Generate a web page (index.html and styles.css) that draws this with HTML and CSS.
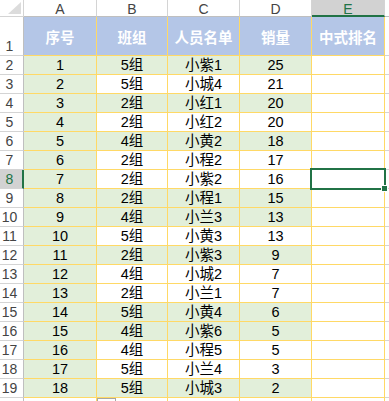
FILE: index.html
```html
<!DOCTYPE html>
<html lang="zh">
<head>
<meta charset="utf-8">
<title>Sheet</title>
<link rel="stylesheet" href="styles.css">
</head>
<body>
<div class="sheet">
  <div class="corner"><span class="tri"></span></div>
  <div class="ch">A</div><div class="ch">B</div><div class="ch">C</div><div class="ch">D</div><div class="ch ch-sel">E</div><div class="ch ch-f"></div>

  <div class="rh rh-tall">1</div>
  <div class="c hd">序号</div><div class="c hd">班组</div><div class="c hd">人员名单</div><div class="c hd">销量</div><div class="c hd">中式排名</div><div class="c f"></div>

  <div class="rh">2</div><div class="c g">1</div><div class="c g">5组</div><div class="c g">小紫1</div><div class="c g">25</div><div class="c"></div><div class="c f"></div>
  <div class="rh">3</div><div class="c g">2</div><div class="c">5组</div><div class="c">小城4</div><div class="c">21</div><div class="c"></div><div class="c f"></div>
  <div class="rh">4</div><div class="c g">3</div><div class="c g">2组</div><div class="c g">小红1</div><div class="c g">20</div><div class="c"></div><div class="c f"></div>
  <div class="rh">5</div><div class="c g">4</div><div class="c">2组</div><div class="c">小红2</div><div class="c">20</div><div class="c"></div><div class="c f"></div>
  <div class="rh">6</div><div class="c g">5</div><div class="c g">4组</div><div class="c g">小黄2</div><div class="c g">18</div><div class="c"></div><div class="c f"></div>
  <div class="rh">7</div><div class="c g">6</div><div class="c">2组</div><div class="c">小程2</div><div class="c">17</div><div class="c"></div><div class="c f"></div>
  <div class="rh rh-sel">8</div><div class="c g">7</div><div class="c">2组</div><div class="c">小紫2</div><div class="c">16</div><div class="c sel-cell"><span class="sel"><span class="handle"></span></span></div><div class="c f"></div>
  <div class="rh">9</div><div class="c g">8</div><div class="c g">2组</div><div class="c g">小程1</div><div class="c g">15</div><div class="c"></div><div class="c f"></div>
  <div class="rh">10</div><div class="c g">9</div><div class="c g">4组</div><div class="c g">小兰3</div><div class="c g">13</div><div class="c"></div><div class="c f"></div>
  <div class="rh">11</div><div class="c g">10</div><div class="c">5组</div><div class="c">小黄3</div><div class="c">13</div><div class="c"></div><div class="c f"></div>
  <div class="rh">12</div><div class="c g">11</div><div class="c g">2组</div><div class="c g">小紫3</div><div class="c g">9</div><div class="c"></div><div class="c f"></div>
  <div class="rh">13</div><div class="c g">12</div><div class="c">4组</div><div class="c">小城2</div><div class="c">7</div><div class="c"></div><div class="c f"></div>
  <div class="rh">14</div><div class="c g">13</div><div class="c">2组</div><div class="c">小兰1</div><div class="c">7</div><div class="c"></div><div class="c f"></div>
  <div class="rh">15</div><div class="c g">14</div><div class="c g">5组</div><div class="c g">小黄4</div><div class="c g">6</div><div class="c"></div><div class="c f"></div>
  <div class="rh">16</div><div class="c g">15</div><div class="c g">4组</div><div class="c g">小紫6</div><div class="c g">5</div><div class="c"></div><div class="c f"></div>
  <div class="rh">17</div><div class="c g">16</div><div class="c">4组</div><div class="c">小程5</div><div class="c">5</div><div class="c"></div><div class="c f"></div>
  <div class="rh">18</div><div class="c g">17</div><div class="c">5组</div><div class="c">小兰4</div><div class="c">3</div><div class="c"></div><div class="c f"></div>
  <div class="rh">19</div><div class="c g">18</div><div class="c g">5组</div><div class="c g">小城3</div><div class="c g">2</div><div class="c"></div><div class="c f"></div>
  <div class="rh"></div><div class="c"></div><div class="c paste-cell"><span class="paste"></span></div><div class="c"></div><div class="c"></div><div class="c"></div><div class="c f"></div>
</div>
</body>
</html>
```
FILE: styles.css
```css
html, body {
  margin: 0;
  padding: 0;
  background: #fff;
  overflow: hidden;
}
.sheet {
  display: grid;
  grid-template-columns: 24px 73px 71px 72px 72px 73px 30px;
  grid-template-rows: 17px 39px repeat(18, 19px) 19px;
  width: 389px;
  height: 401px;
  overflow: hidden;
  font-family: "Liberation Sans", "Noto Sans CJK SC", sans-serif;
  font-size: 14.5px;
  color: #000;
}
.corner {
  position: relative;
  background: #fff;
  border-right: 1px solid #d4d4d4;
  border-bottom: 1px solid #d4d4d4;
  box-sizing: border-box;
}
.tri {
  position: absolute;
  right: 2px;
  bottom: 2px;
  width: 0;
  height: 0;
  border-left: 13px solid transparent;
  border-bottom: 12px solid #dcdcdc;
}
.ch {
  box-sizing: border-box;
  border-right: 1px solid #d4d4d4;
  border-bottom: 1px solid #bfbfbf;
  display: flex;
  align-items: center;
  justify-content: center;
  font-size: 14px;
  color: #444;
  padding-top: 1px;
}
.ch-sel {
  background: #d2d2d2;
  color: #217346;
  border-bottom: 2px solid #217346;
  padding-top: 2px;
}
.ch-f {
  border-right: none;
}
.rh {
  box-sizing: border-box;
  border-right: 1px solid #bfbfbf;
  border-bottom: 1px solid #d4d4d4;
  display: flex;
  align-items: flex-end;
  justify-content: center;
  padding-right: 4px;
  font-size: 14px;
  line-height: 18px;
  color: #444;
}
.rh-sel {
  background: #d2d2d2;
  color: #217346;
  border-right: 2px solid #217346;
  padding-right: 3px;
}
.c {
  box-sizing: border-box;
  border-right: 1px solid #ffd966;
  border-bottom: 1px solid #ffd966;
  display: flex;
  align-items: flex-end;
  justify-content: center;
  line-height: 18px;
  white-space: nowrap;
}
.g {
  background: #e2efda;
}
.hd {
  background: #b4c6e7;
  color: #fff;
  font-weight: bold;
  align-items: center;
  padding-top: 3px;
  font-size: 14.5px;
}
.f {
  border-right: none;
  border-bottom: 1px solid #d4d4d4;
}
.sel-cell {
  position: relative;
}
.sel {
  position: absolute;
  left: -2px;
  top: -2px;
  right: -2px;
  bottom: -2px;
  border: 2px solid #217346;
  box-sizing: border-box;
}
.handle {
  position: absolute;
  right: -4px;
  bottom: -4px;
  width: 5px;
  height: 5px;
  background: #217346;
  border: 1px solid #fff;
}
.paste-cell {
  position: relative;
}
.paste {
  position: absolute;
  left: 0;
  top: 0;
  width: 19px;
  height: 18px;
  border: 1px solid #a6a6a6;
  background: #fff;
  box-sizing: border-box;
}
```
